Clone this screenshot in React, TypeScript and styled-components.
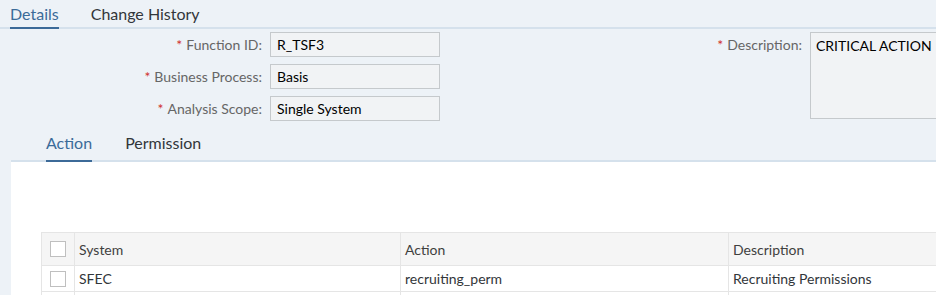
import React from 'react';
import styled, { createGlobalStyle } from 'styled-components';

const GlobalStyle = createGlobalStyle`
  html, body {
    margin: 0;
    padding: 0;
    background: #edf2f7;
  }
  body {
    font-family: Lato, "Liberation Sans", sans-serif;
    color: #32363a;
    overflow: hidden;
  }
`;

const Page = styled.div`
  width: 936px;
  height: 295px;
  overflow: hidden;
  background: #edf2f7;
`;

const TabBar = styled.div<{ $inset?: number; $gap: number; $height: number; $top?: number }>`
  display: flex;
  align-items: stretch;
  gap: ${p => p.$gap}px;
  height: ${p => p.$height}px;
  box-sizing: border-box;
  padding-left: ${p => p.$inset ?? 0}px;
  padding-top: ${p => p.$top ?? 0}px;
  border-bottom: 2px solid #d5e1ec;
`;

const Tab = styled.div<{ $active?: boolean }>`
  display: flex;
  align-items: center;
  font-size: 16px;
  color: ${p => (p.$active ? '#3b6b99' : '#32363a')};
  margin-bottom: -2px;
  border-bottom: 2px solid ${p => (p.$active ? '#3c6a98' : 'transparent')};
  white-space: nowrap;
`;

const FormGrid = styled.div`
  display: grid;
  grid-template-columns: 262px 170px 354px 150px;
  grid-template-rows: repeat(3, 25px);
  column-gap: 8px;
  row-gap: 7px;
  padding-top: 3px;
`;

const Label = styled.div<{ $row: number }>`
  grid-column: 1;
  grid-row: ${p => p.$row};
  display: flex;
  align-items: center;
  justify-content: flex-end;
  font-size: 14px;
  color: #666666;
  white-space: nowrap;
`;

const Required = styled.span`
  color: #d0312d;
  margin-right: 4px;
`;

const Field = styled.div<{ $row: number }>`
  grid-column: 2;
  grid-row: ${p => p.$row};
  display: flex;
  align-items: center;
  box-sizing: border-box;
  padding: 0 6px;
  font-size: 14px;
  color: #000000;
  background: #f1f3f5;
  border: 1px solid #c5c9cc;
  white-space: nowrap;
`;

const DescLabel = styled(Label)`
  grid-column: 3;
  height: 25px;
`;

const DescField = styled(Field)`
  grid-column: 4;
  grid-row: 1 / span 3;
  height: 87px;
  align-items: flex-start;
  padding: 4px 5px 0;
`;

const Section = styled.div`
  margin-left: 11px;
`;

const Panel = styled.div`
  background: #ffffff;
  height: 200px;
  padding: 70px 0 0 30px;
  box-sizing: border-box;
`;

const Table = styled.div`
  display: grid;
  grid-template-columns: 33px 326px 328px 1fr;
  border-top: 1px solid #e5e5e5;
  border-left: 1px solid #e5e5e5;
  width: 950px;
`;

const Cell = styled.div<{ $header?: boolean }>`
  display: flex;
  align-items: center;
  box-sizing: border-box;
  height: ${p => (p.$header ? 33 : 26)}px;
  padding-left: 4px;
  font-size: 14px;
  color: ${p => (p.$header ? '#3f3f3f' : '#32363a')};
  background: ${p => (p.$header ? '#f5f5f5' : '#ffffff')};
  border-right: 1px solid #e5e5e5;
  border-bottom: 1px solid #e5e5e5;
  white-space: nowrap;
`;

const CheckCell = styled(Cell)`
  justify-content: center;
  padding-left: 0;
`;

const Checkbox = styled.span`
  width: 16px;
  height: 16px;
  box-sizing: border-box;
  border: 1px solid #bfbfbf;
  background: #ffffff;
`;

const rows = [{ system: 'SFEC', action: 'recruiting_perm', description: 'Recruiting Permissions' }];

export default function App() {
  return (
    <Page>
      <GlobalStyle />
      <TabBar $inset={10} $gap={32} $height={29}>
        <Tab $active>Details</Tab>
        <Tab>Change History</Tab>
      </TabBar>

      <FormGrid>
        <Label $row={1}><Required>*</Required>Function ID:</Label>
        <Field $row={1}>R_TSF3</Field>
        <Label $row={2}><Required>*</Required>Business Process:</Label>
        <Field $row={2}>Basis</Field>
        <Label $row={3}><Required>*</Required>Analysis Scope:</Label>
        <Field $row={3}>Single System</Field>
        <DescLabel $row={1}><Required>*</Required>Description:</DescLabel>
        <DescField $row={1}>CRITICAL ACTION</DescField>
      </FormGrid>

      <Section>
        <TabBar $inset={35} $gap={33} $height={41} $top={3}>
          <Tab $active>Action</Tab>
          <Tab>Permission</Tab>
        </TabBar>
        <Panel>
          <Table>
            <CheckCell $header><Checkbox /></CheckCell>
            <Cell $header>System</Cell>
            <Cell $header>Action</Cell>
            <Cell $header>Description</Cell>
            {rows.map(r => (
              <React.Fragment key={r.action}>
                <CheckCell><Checkbox /></CheckCell>
                <Cell>{r.system}</Cell>
                <Cell>{r.action}</Cell>
                <Cell>{r.description}</Cell>
              </React.Fragment>
            ))}
            <CheckCell />
            <Cell />
            <Cell />
            <Cell />
          </Table>
        </Panel>
      </Section>
    </Page>
  );
}
